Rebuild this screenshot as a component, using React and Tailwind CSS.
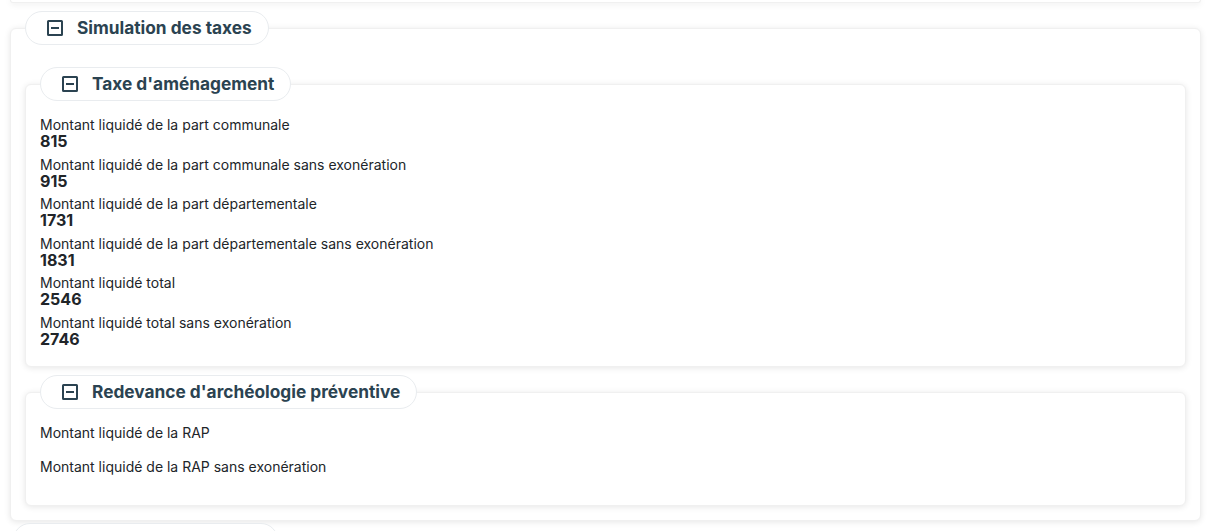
import React from 'react';

const MinusBox = () => (
  <svg width="16" height="16" viewBox="0 0 16 16" className="shrink-0" aria-hidden="true">
    <rect x="1" y="1" width="14" height="14" rx="0.5" fill="none" stroke="currentColor" strokeWidth="2" />
    <path d="M4 8h8" stroke="currentColor" strokeWidth="2" />
  </svg>
);

const Legend = ({ title }) => (
  <div className="relative z-10 self-start -mb-[17px] h-[34px] flex items-center gap-[14px] pl-[21px] pr-[16px] rounded-full border border-[#e9ecef] bg-white text-[#2b4351]">
    <MinusBox />
    <span className="text-[17.3px] leading-6 font-bold">{title}</span>
  </div>
);

const Field = ({ label, value }) => (
  <div className="mb-[5.6px]">
    <div className="text-sm leading-[17px]">{label}</div>
    {value ? (
      <div className="text-base leading-[17px] font-bold">{value}</div>
    ) : (
      <div className="h-[12px]" />
    )}
  </div>
);

const card = 'bg-white rounded-md border border-[#f0f0f0] shadow-[0_1px_6px_rgba(0,0,0,0.1)]';

const taxeAmenagement = [
  ['Montant liquidé de la part communale', '815'],
  ['Montant liquidé de la part communale sans exonération', '915'],
  ['Montant liquidé de la part départementale', '1731'],
  ['Montant liquidé de la part départementale sans exonération', '1831'],
  ['Montant liquidé total', '2546'],
  ['Montant liquidé total sans exonération', '2746'],
];

const redevance = [
  ['Montant liquidé de la RAP', ''],
  ['Montant liquidé de la RAP sans exonération', ''],
];

export default function App() {
  return (
    <div className="min-h-screen bg-white px-[10px] font-['Inter',sans-serif] text-[#212529] overflow-hidden">
      {/* bottom of the previous card */}
      <div className={`h-[3px] !rounded-t-none !border-t-0 ${card}`} />

      <section className="mt-[8px] flex flex-col">
        <div className="ml-[15px] flex flex-col">
          <Legend title="Simulation des taxes" />
        </div>
        <div className={`${card} pt-[38px] px-[14px] pb-[14px]`}>
          <div className="flex flex-col">
            <div className="ml-[15px] flex flex-col">
              <Legend title="Taxe d'aménagement" />
            </div>
            <div className={`${card} pt-[31px] px-[14px] pb-[12px]`}>
              {taxeAmenagement.map(([label, value]) => (
                <Field key={label} label={label} value={value} />
              ))}
            </div>
          </div>

          <div className="mt-[8px] flex flex-col">
            <div className="ml-[15px] flex flex-col">
              <Legend title="Redevance d'archéologie préventive" />
            </div>
            <div className={`${card} pt-[31px] px-[14px] pb-[12px]`}>
              {redevance.map(([label, value]) => (
                <Field key={label} label={label} value={value} />
              ))}
            </div>
          </div>
        </div>
      </section>

      <section className="mt-[2px] flex flex-col">
        <div className="ml-[3px] flex flex-col">
          <Legend title="Paramètres des calculs" />
        </div>
      </section>
    </div>
  );
}
